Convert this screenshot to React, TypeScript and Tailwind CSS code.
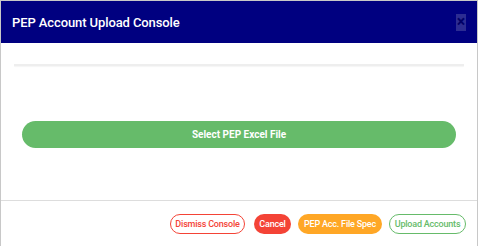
import React from "react";

export default function App() {
  return (
    <div
      className="w-[478px] h-[246px] bg-white border-t border-l border-r border-[#c8c8c8] flex flex-col overflow-hidden"
      style={{ fontFamily: "Roboto, 'Liberation Sans', Arial, sans-serif" }}
    >
      <div className="h-[42px] shrink-0 bg-[#000080] flex items-center justify-between pl-[11px] pr-[11px]">
        <div className="text-white text-[13px] font-medium leading-none tracking-[-0.1px]">
          PEP Account Upload Console
        </div>
        <button className="w-[10px] h-[17px] bg-[#dddddd] opacity-20 flex items-center justify-center text-black text-[16px] font-bold leading-none p-0">
          ×
        </button>
      </div>
      <div className="flex-1 px-[13px] pt-[21px]">
        <div className="h-[2px] bg-[#eeeeee] shadow-[0_1px_1px_rgba(0,0,0,0.04)]" />
        <div className="px-[8px] pt-[55px]">
          <button className="w-full h-[27px] rounded-full bg-[#66bb6a] text-white text-[10px] font-bold flex items-center justify-center">
            Select PEP Excel File
          </button>
        </div>
      </div>
      <div className="h-[46px] shrink-0 border-t border-[#dddddd] flex items-start justify-end pt-[13px] pr-[11px]">
        <button className="w-[75px] h-[20px] rounded-full border border-[#f44336] text-[#f44336] text-[9px] font-medium leading-none flex items-center justify-center tracking-[-0.2px]">
          Dismiss Console
        </button>
        <button className="ml-[9px] w-[37px] h-[20px] rounded-full bg-[#f44336] text-white text-[9px] font-medium leading-none flex items-center justify-center tracking-[-0.2px]">
          Cancel
        </button>
        <button className="ml-[7px] w-[84px] h-[20px] rounded-full bg-[#ffa726] text-white text-[9px] font-medium leading-none flex items-center justify-center tracking-[-0.2px]">
          PEP Acc. File Spec
        </button>
        <button className="ml-[7px] w-[77px] h-[20px] rounded-full border border-[#66bb6a] text-[#66bb6a] text-[9px] font-medium leading-none flex items-center justify-center tracking-[-0.2px]">
          Upload Accounts
        </button>
      </div>
    </div>
  );
}
